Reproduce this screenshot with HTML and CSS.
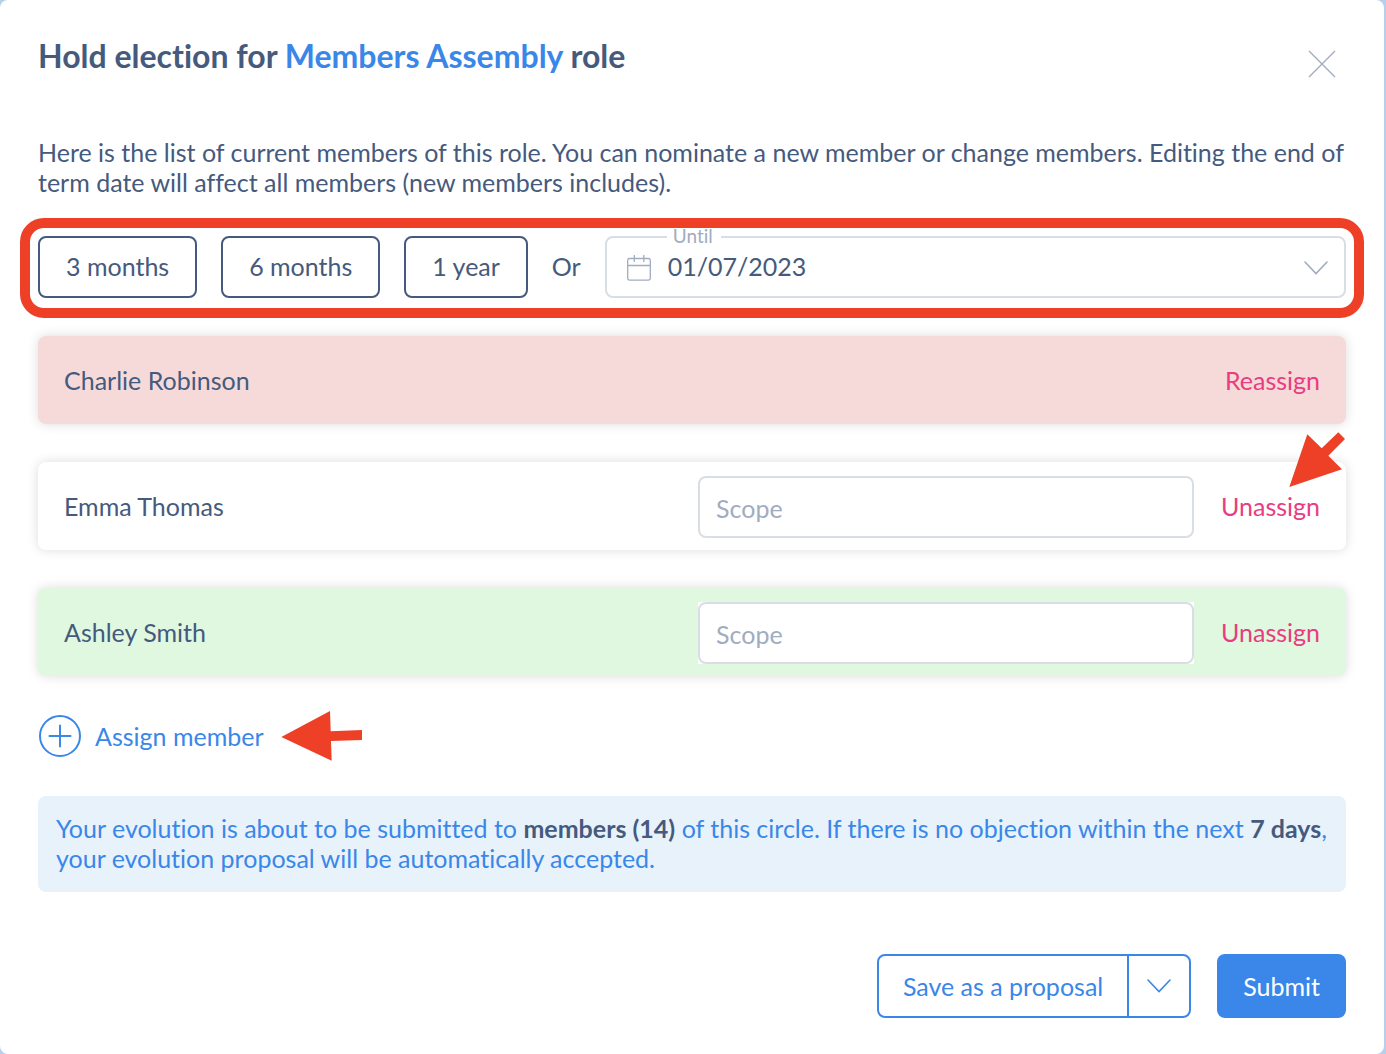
FILE: index.html
```html
<!DOCTYPE html>
<html lang="en">
<head>
<meta charset="utf-8">
<meta name="viewport" content="width=device-width, initial-scale=1">
<title>Hold election</title>
<link rel="stylesheet" href="styles.css">
</head>
<body>
<main class="modal">
  <header class="modal-header">
    <h1 class="title">Hold election for <a class="role-link" href="#">Members Assembly</a> role</h1>
    <button class="close" type="button" aria-label="Close">
      <svg width="28" height="28" viewBox="0 0 28 28"><path d="M1 1l26 26M27 1L1 27" fill="none" stroke="currentColor" stroke-width="1.4"/></svg>
    </button>
  </header>

  <p class="intro">Here is the list of current members of this role. You can nominate a new member or change members. Editing the end of term date will affect all members (new members includes).</p>

  <section class="term">
    <button class="term-option" type="button">3 months</button>
    <button class="term-option" type="button">6 months</button>
    <button class="term-option" type="button">1 year</button>
    <span class="or">Or</span>
    <div class="date-field">
      <label class="date-label" for="until">Until</label>
      <svg class="calendar" width="24" height="26" viewBox="0 0 24 26"><path d="M2.5 3.5h19a1.8 1.8 0 0 1 1.8 1.8v18a1.8 1.8 0 0 1-1.8 1.8h-19a1.8 1.8 0 0 1-1.8-1.8v-18a1.8 1.8 0 0 1 1.8-1.8zM.7 10.5h22.6M7.3 0v7M16.8 0v7" fill="none" stroke="currentColor" stroke-width="1.3"/></svg>
      <select class="date-select" id="until"><option>01/07/2023</option></select>
      <svg class="date-chevron" width="24" height="14" viewBox="0 0 24 14"><path d="M1 1l11 11.5L23 1" fill="none" stroke="currentColor" stroke-width="1.6" stroke-linecap="round"/></svg>
    </div>
  </section>

  <ul class="members">
    <li class="member member-removed">
      <span class="name">Charlie Robinson</span>
      <button class="member-action" type="button">Reassign</button>
    </li>
    <li class="member">
      <span class="name">Emma Thomas</span>
      <span class="scope-box"><input class="scope" type="text" placeholder="Scope" aria-label="Scope for Emma Thomas"></span>
      <button class="member-action" type="button">Unassign</button>
      <svg class="arrow-corner" width="60" height="60" viewBox="0 0 60 60"><path d="M3.3 57L21.3 4.3l14.4 14L52.3 2.3 59 9 42.3 25.7 56 39.3z" fill="#ed4026"/></svg>
    </li>
    <li class="member member-added">
      <span class="name">Ashley Smith</span>
      <span class="scope-box"><input class="scope" type="text" placeholder="Scope" aria-label="Scope for Ashley Smith"></span>
      <button class="member-action" type="button">Unassign</button>
    </li>
  </ul>

  <div class="assign-row">
    <button class="assign" type="button">
      <svg width="44" height="44" viewBox="0 0 44 44"><circle cx="22" cy="22" r="20" fill="none" stroke="currentColor" stroke-width="2"/><path d="M22 11.5v21M11.5 22h21" fill="none" stroke="currentColor" stroke-width="2" stroke-linecap="round"/></svg>
      Assign member
    </button>
    <svg width="84" height="52" viewBox="0 0 84 52"><path d="M1.3 27L50 1l.7 20.3L82 20v10l-31 1 .7 19.7z" fill="#ed4026"/></svg>
  </div>

  <p class="notice">Your evolution is about to be submitted to <strong>members (14)</strong> of this circle. If there is no objection within the next <strong>7 days</strong>, your evolution proposal will be automatically accepted.</p>

  <footer class="actions">
    <div class="split">
      <button class="split-main" type="button">Save as a proposal</button>
      <button class="split-toggle" type="button" aria-label="More save options">
        <svg width="24" height="14" viewBox="0 0 24 14"><path d="M1 1l11 11.5L23 1" fill="none" stroke="currentColor" stroke-width="1.6" stroke-linecap="round"/></svg>
      </button>
    </div>
    <button class="submit" type="button">Submit</button>
  </footer>
</main>
</body>
</html>
```
FILE: styles.css
```css
* {
  box-sizing: border-box;
}

body {
  margin: 0;
  background: #b5cfec;
  color: #455a7d;
  font: 25px/30px Lato, sans-serif;
  font-variant-ligatures: none;
}

button,
input,
select {
  margin: 0;
  padding: 0;
  border: 0;
  background: none;
  color: inherit;
  font: inherit;
  font-variant-ligatures: none;
}

svg {
  display: block;
  flex: none;
}

.modal {
  min-height: 100vh;
  margin-right: 2px;
  padding: 40px 38px 36px;
  border-radius: 8px;
  background: #fff;
}

.modal-header {
  display: flex;
  align-items: flex-start;
  justify-content: space-between;
}

.title {
  margin: 0;
  font-size: 32px;
  line-height: 32px;
  font-weight: 700;
}

.role-link {
  color: #3a87e9;
  text-decoration: none;
}

.close {
  display: grid;
  place-items: center;
  width: 48px;
  height: 48px;
  color: #a1acc0;
}

.intro {
  margin: 49px 0 21px;
}

.term {
  display: flex;
  align-items: center;
  gap: 24px;
  margin: 0 -18px 18px;
  padding: 8px 8px 10px;
  border: 10px solid #ed4026;
  border-radius: 24px;
}

.term-option {
  height: 62px;
  padding: 0 26px 2px;
  border: 2px solid #455a7d;
  border-radius: 8px;
}

.or {
  padding-bottom: 2px;
}

.date-field {
  position: relative;
  display: flex;
  flex: 1;
  align-items: center;
  height: 62px;
  padding: 2px 0 0 20px;
  border: 2px solid #d9dde4;
  border-radius: 8px;
  color: #a1acc0;
}

.date-label {
  position: absolute;
  top: -10px;
  left: 60px;
  padding: 0 8px 0 6px;
  background: #fff;
  font-size: 19px;
  line-height: 16px;
}

.date-select {
  flex: 1;
  height: 56px;
  padding: 0 0 4px 17px;
  appearance: none;
  color: #455a7d;
}

.date-chevron {
  position: absolute;
  right: 16px;
  pointer-events: none;
}

.members {
  display: grid;
  gap: 38px;
  margin: 0 0 38px;
  padding: 0;
  list-style: none;
}

.member {
  position: relative;
  display: flex;
  align-items: center;
  gap: 26px;
  height: 88px;
  padding: 0 26px;
  border-radius: 8px;
  background: #fff;
  box-shadow: 0 0 12px rgba(0, 0, 0, 0.14);
}

.member-removed {
  background: #f6dada;
}

.member-added {
  background: #dff8df;
}

.name {
  flex: 1;
}

.scope-box {
  flex: 0 1 496px;
  margin-top: 2px;
  background: #fff;
}

.scope {
  display: block;
  width: 100%;
  height: 62px;
  padding: 2px 16px 0;
  border: 2px solid #d9dde4;
  border-radius: 8px;
}

.scope::placeholder {
  color: #a1acc0;
  opacity: 1;
}

.member-action {
  min-width: 100px;
  text-align: right;
  color: #ea3c80;
}

.arrow-corner {
  position: absolute;
  top: -32px;
  right: 0;
}

.assign-row {
  display: flex;
  align-items: center;
  gap: 16px;
  height: 44px;
  margin-bottom: 38px;
}

.assign {
  display: flex;
  align-items: center;
  gap: 13px;
  color: #3a87e9;
}

.notice {
  margin: 0 0 62px;
  padding: 17px 12px 19px 18px;
  border-radius: 8px;
  background: #e8f2fb;
  color: #3a87e9;
}

.notice strong {
  color: #455a7d;
}

.actions {
  display: flex;
  justify-content: flex-end;
  gap: 26px;
}

.split {
  display: flex;
  height: 64px;
  border: 2px solid #3a87e9;
  border-radius: 8px;
  color: #3a87e9;
}

.split-main {
  padding: 0 24px;
}

.split-toggle {
  display: grid;
  place-items: center;
  width: 62px;
  border-left: 2px solid #3a87e9;
}

.submit {
  height: 64px;
  padding: 0 26px;
  border-radius: 8px;
  background: #3a87e9;
  color: #fff;
}
```
